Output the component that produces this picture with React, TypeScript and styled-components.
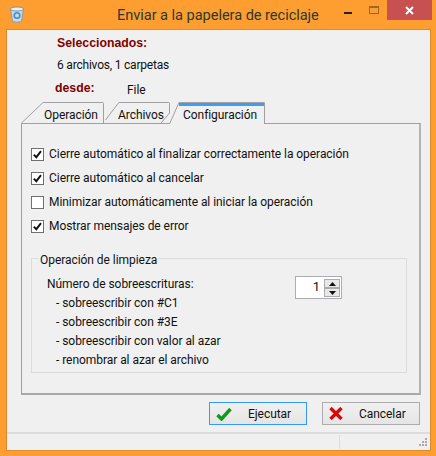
import { ReactNode } from "react";
import styled, { createGlobalStyle } from "styled-components";

const GlobalStyle = createGlobalStyle`
  html, body {
    margin: 0;
    padding: 0;
    width: 436px;
    height: 456px;
    overflow: hidden;
    background: #ff9e30;
  }
  * {
    box-sizing: border-box;
  }
`;

const WindowFrame = styled.div`
  width: 436px;
  height: 456px;
  display: flex;
  flex-direction: column;
  background: #ff9e30;
  font-family: Roboto, "Noto Sans", sans-serif;
  font-size: 12px;
  letter-spacing: -0.05px;
  color: #111;
`;

const TitleBar = styled.div`
  height: 29px;
  flex: none;
  display: flex;
  align-items: flex-start;
  position: relative;
`;

const AppIcon = styled.div`
  width: 16px;
  height: 18px;
  margin: 6px 0 0 9px;
  flex: none;
`;

const TitleText = styled.div`
  position: absolute;
  left: 117px;
  top: 4px;
  font-size: 14.6px;
  line-height: 22px;
  color: #2b3a30;
  white-space: nowrap;
`;

const WindowButtons = styled.div`
  margin-left: auto;
  margin-right: 4px;
  display: flex;
`;

const CaptionButton = styled.div<{ $close?: boolean }>`
  width: ${({ $close }) => ($close ? "45px" : "26px")};
  height: 20px;
  display: flex;
  align-items: center;
  justify-content: center;
  background: ${({ $close }) => ($close ? "#c75050" : "transparent")};
`;

const Client = styled.div`
  width: 425px;
  height: 422px;
  margin-left: 6px;
  flex: none;
  background: #f0f0f0;
  border: 1px solid #dc8a30;
  display: flex;
  flex-direction: column;
`;

const Summary = styled.div`
  height: 72px;
  flex: none;
  padding: 4px 0 0 50px;
`;

const BoldLabel = styled.div`
  font-family: "Liberation Sans", Arial, sans-serif;
  font-weight: bold;
  font-size: 12.3px;
  letter-spacing: 0;
  line-height: 18px;
  color: #800000;
`;

const FromLabel = styled(BoldLabel)`
  width: 72px;
  margin-left: -2px;
`;

const SummaryLine = styled.div`
  line-height: 18px;
  margin-top: 4px;
  letter-spacing: -0.2px;
`;

const FromRow = styled.div`
  display: flex;
  margin-top: 5px;
  line-height: 18px;
`;

const FromValue = styled.div`
  margin-top: 2px;
`;

const TabStrip = styled.div`
  height: 22px;
  flex: none;
  margin-left: 14px;
  width: 400px;
  position: relative;
  z-index: 1;
  display: flex;
`;

const TabShape = styled.svg`
  position: absolute;
  left: 0;
  top: 0;
  overflow: visible;
`;

const Tab = styled.div<{ $w: number; $pad: number; $ml?: number; $active?: boolean }>`
  width: ${({ $w }) => $w}px;
  height: 22px;
  margin-left: ${({ $ml }) => $ml ?? 0}px;
  padding: 4px 0 0 ${({ $pad }) => $pad}px;
  line-height: 18px;
  position: relative;
  z-index: ${({ $active }) => ($active ? 2 : 1)};
  white-space: nowrap;
`;

const TabLabel = styled.span`
  position: relative;
`;

const TabPanel = styled.div`
  width: 400px;
  height: 272px;
  margin-left: 14px;
  margin-top: -1px;
  flex: none;
  background: #f0f0f0;
  border: 1px solid #a0a0a0;
  border-right-width: 2px;
  border-bottom-width: 2px;
  border-right-color: #b4b4b4;
  border-bottom-color: #a8a8a8;
  padding: 18px 0 0 9px;
  display: flex;
  flex-direction: column;
`;

const CheckRow = styled.div`
  display: flex;
  align-items: center;
  height: 24px;
  gap: 5px;
`;

const CheckBox = styled.div`
  width: 13px;
  height: 13px;
  border: 1px solid #707070;
  background: #fff;
  display: flex;
  align-items: center;
  justify-content: center;
`;

const GroupBox = styled.fieldset`
  width: 376px;
  height: 123px;
  margin: 12px 0 0 0;
  padding: 9px 0 0 0;
  border: 1px solid #dcdcdc;
  position: relative;
`;

const GroupLegend = styled.legend`
  padding: 0 1px;
  margin-left: 7px;
  line-height: 16px;
  transform: translateY(2px);
`;

const GroupBody = styled.div`
  display: flex;
  align-items: flex-start;
  justify-content: space-between;
  padding: 0 64px 0 15px;
`;

const LineList = styled.div`
  display: flex;
  flex-direction: column;
`;

const ListLine = styled.div<{ $indent?: boolean }>`
  line-height: 19px;
  padding-left: ${({ $indent }) => ($indent ? "9px" : "0")};
  white-space: nowrap;
`;

const Spinner = styled.div`
  width: 47px;
  height: 23px;
  margin-top: 1px;
  display: flex;
  border: 1px solid #acacb4;
  background: #fff;
`;

const SpinValue = styled.div`
  flex: 1;
  text-align: right;
  padding-right: 4px;
  line-height: 20px;
  font-size: 13px;
`;

const SpinButtons = styled.div`
  width: 16px;
  margin: 2px 1px 0 0;
  display: flex;
  flex-direction: column;
`;

const SpinButton = styled.div`
  height: 9px;
  background: #e8e8e8;
  border: 1px solid #acacac;
  display: flex;
  align-items: center;
  justify-content: center;
`;

const ButtonRow = styled.div`
  height: 39px;
  flex: none;
  display: flex;
  gap: 15px;
  padding: 7px 0 0 202px;
  border-bottom: 2px solid #dcdcdc;
`;

const ActionButton = styled.div<{ $focused?: boolean }>`
  width: 98px;
  height: 23px;
  display: flex;
  align-items: center;
  padding-left: 6px;
  border: 1px solid ${({ $focused }) => ($focused ? "#3399ff" : "#acacac")};
  background: linear-gradient(#f0f0f0, #e5e5e5);
`;

const ButtonText = styled.span<{ $gap: number }>`
  margin-left: ${({ $gap }) => $gap}px;
`;

const StatusBar = styled.div`
  flex: 1;
  display: flex;
  justify-content: flex-end;
  align-items: stretch;
  padding-top: 1px;
`;

const StatusCell = styled.div`
  width: 91px;
  border-left: 1px solid #dcdcdc;
  display: flex;
  align-items: flex-end;
  justify-content: flex-end;
  padding: 0 3px 3px 0;
  margin-bottom: 1px;
`;

const labels = [
  { text: "Cierre automático al finalizar correctamente la operación", checked: true },
  { text: "Cierre automático al cancelar", checked: true },
  { text: "Minimizar automáticamente al iniciar la operación", checked: false },
  { text: "Mostrar mensajes de error", checked: true },
];

const CheckLabel = ({ text, checked }: { text: string; checked: boolean }) => (
  <CheckRow>
    <CheckBox>
      {checked && (
        <svg width="9" height="9" viewBox="0 0 9 9">
          <path d="M0.8 4.6 L3.3 7.2 L8 1.2" fill="none" stroke="#111" strokeWidth="1.9" />
        </svg>
      )}
    </CheckBox>
    <span>{text}</span>
  </CheckRow>
);

const TabItem = ({
  w,
  pad,
  ml,
  active,
  path,
  children,
}: {
  w: number;
  pad: number;
  ml?: number;
  active?: boolean;
  path: string;
  children: ReactNode;
}) => (
  <Tab $w={w} $pad={pad} $ml={ml} $active={active}>
    <TabShape width={w} height="22">
      <path d={path} fill="#f0f0f0" stroke="#a0a0a0" strokeWidth="1" />
      {active && <path d="M10 2.5 H95" stroke="#3f9cf5" strokeWidth="3" />}
    </TabShape>
    <TabLabel>{children}</TabLabel>
  </Tab>
);

const RecycleBin = () => (
  <svg width="16" height="18" viewBox="0 0 16 18">
    <path d="M1.5 3 L3.5 15.5 Q8 17 12.5 15.5 L14.5 3 Z" fill="#c9dbe4" stroke="#8c9aa2" strokeWidth="1" />
    <ellipse cx="8" cy="3" rx="6.8" ry="2" fill="#e8eff2" stroke="#86949c" strokeWidth="1" />
    <circle cx="8" cy="9.5" r="2.8" fill="none" stroke="#3f8fd8" strokeWidth="1.6" />
  </svg>
);

const App = () => (
  <WindowFrame>
    <GlobalStyle />
    <TitleBar>
      <AppIcon>
        <RecycleBin />
      </AppIcon>
      <TitleText>Enviar a la papelera de reciclaje</TitleText>
      <WindowButtons>
        <CaptionButton>
          <svg width="9" height="9" viewBox="0 0 9 9">
            <rect x="0" y="6" width="8" height="2" fill="#222" />
          </svg>
        </CaptionButton>
        <CaptionButton>
          <svg width="11" height="9" viewBox="0 0 11 9">
            <rect x="0.5" y="0.5" width="9" height="7" fill="none" stroke="#9a6a2a" />
            <rect x="0" y="0" width="10" height="2" fill="#9a6a2a" />
          </svg>
        </CaptionButton>
        <CaptionButton $close>
          <svg width="9" height="9" viewBox="0 0 9 9">
            <path d="M1 1 L8 8 M8 1 L1 8" stroke="#fff" strokeWidth="2" />
          </svg>
        </CaptionButton>
      </WindowButtons>
    </TitleBar>
    <Client>
      <Summary>
        <BoldLabel>Seleccionados:</BoldLabel>
        <SummaryLine>6 archivos, 1 carpetas</SummaryLine>
        <FromRow>
          <FromLabel>desde:</FromLabel>
          <FromValue>File</FromValue>
        </FromRow>
      </Summary>
      <TabStrip>
        <TabItem w={83} pad={23} path="M0.5 21 L21.5 1 Q22 0.5 23 0.5 H81.5 Q82.5 0.5 82.5 1.5 V21">
          Operación
        </TabItem>
        <TabItem w={66} pad={14} path="M1.5 18 L14 1.5 Q15 0.5 16 0.5 H64.5 Q65.5 0.5 65.5 1.5 V11 L57 21">
          Archivos
        </TabItem>
        <TabItem w={96} pad={14} ml={-1} active path="M0.5 22 L10 0.5 H95.5 V22">
          Configuración
        </TabItem>
      </TabStrip>
      <TabPanel>
        {labels.map((l) => (
          <CheckLabel key={l.text} text={l.text} checked={l.checked} />
        ))}
        <GroupBox>
          <GroupLegend>Operación de limpieza</GroupLegend>
          <GroupBody>
            <LineList>
              <ListLine>Número de sobreescrituras:</ListLine>
              <ListLine $indent>- sobreescribir con #C1</ListLine>
              <ListLine $indent>- sobreescribir con #3E</ListLine>
              <ListLine $indent>- sobreescribir con valor al azar</ListLine>
              <ListLine $indent>- renombrar al azar el archivo</ListLine>
            </LineList>
            <Spinner>
              <SpinValue>1</SpinValue>
              <SpinButtons>
                <SpinButton>
                  <svg width="7" height="4" viewBox="0 0 7 4">
                    <path d="M3.5 0 L7 4 H0 Z" fill="#111" />
                  </svg>
                </SpinButton>
                <SpinButton>
                  <svg width="7" height="4" viewBox="0 0 7 4">
                    <path d="M0 0 H7 L3.5 4 Z" fill="#111" />
                  </svg>
                </SpinButton>
              </SpinButtons>
            </Spinner>
          </GroupBody>
        </GroupBox>
      </TabPanel>
      <ButtonRow>
        <ActionButton $focused>
          <svg width="16" height="14" viewBox="0 0 16 14">
            <path d="M1.5 8 L5.5 12 L14.5 2" fill="none" stroke="#0f9a1a" strokeWidth="3.4" />
          </svg>
          <ButtonText $gap={16}>Ejecutar</ButtonText>
        </ActionButton>
        <ActionButton>
          <svg width="14" height="13" viewBox="0 0 14 13">
            <path d="M1.5 1 L12.5 12 M12.5 1 L1.5 12" stroke="#d80808" strokeWidth="3.4" />
          </svg>
          <ButtonText $gap={16}>Cancelar</ButtonText>
        </ActionButton>
      </ButtonRow>
      <StatusBar>
        <StatusCell>
          <svg width="8" height="8" viewBox="0 0 8 8" fill="#a8a8a8">
            <rect x="6" y="0" width="2" height="2" />
            <rect x="3" y="3" width="2" height="2" />
            <rect x="6" y="3" width="2" height="2" />
            <rect x="0" y="6" width="2" height="2" />
            <rect x="3" y="6" width="2" height="2" />
            <rect x="6" y="6" width="2" height="2" />
          </svg>
        </StatusCell>
      </StatusBar>
    </Client>
  </WindowFrame>
);

export default App;
